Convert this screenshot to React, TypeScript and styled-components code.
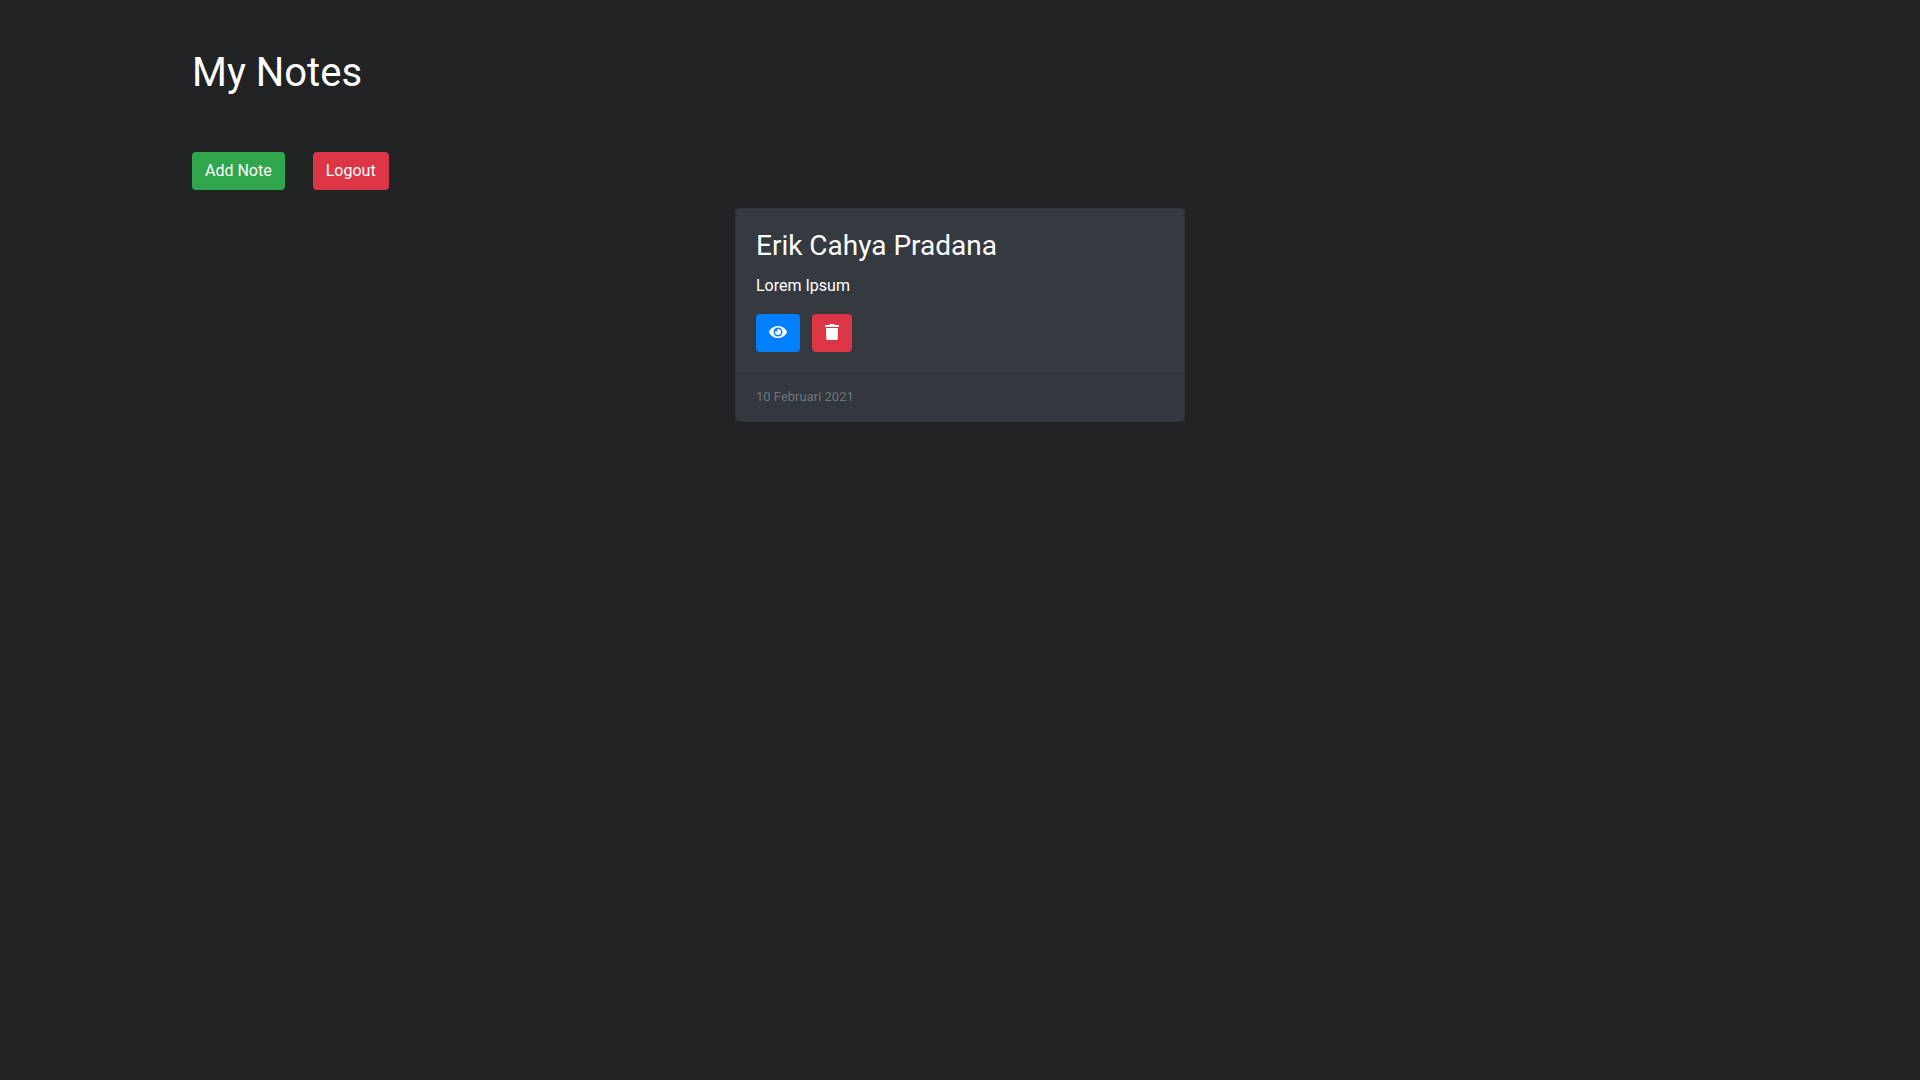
import React from "react";
import styled, { createGlobalStyle } from "styled-components";
import { FaEye } from "react-icons/fa";

const GlobalStyle = createGlobalStyle`
  *, *::before, *::after { box-sizing: border-box; }
  body {
    margin: 0;
    background: #202224;
    color: #fff;
    font: 400 16px/24px Roboto, "Liberation Sans", sans-serif;
  }
`;

const Page = styled.main`
  width: 80%;
  margin: 0 auto;
  padding-top: 48px;
`;

const PageTitle = styled.h1`
  margin: 0 0 54px;
  font-size: 40px;
  line-height: 50px;
  font-weight: 400;
`;

const Toolbar = styled.div`
  display: flex;
  gap: 28px;
  margin-bottom: 18px;
`;

const Button = styled.button<{ $color: string }>`
  display: inline-flex;
  align-items: center;
  justify-content: center;
  height: 38px;
  padding: 0 13px;
  border: 0;
  border-radius: 4px;
  background: ${(p) => p.$color};
  color: #fff;
  font: inherit;
  cursor: pointer;
`;

const IconButton = styled(Button)`
  padding-bottom: 2px;
`;

const TrashSvg = styled.svg`
  width: 14px;
  height: 16px;
  fill: currentColor;
`;

const Notes = styled.section`
  display: flex;
  flex-wrap: wrap;
  justify-content: center;
`;

const Card = styled.article`
  width: 450px;
  max-width: 100%;
  border: 1px solid #2f3439;
  border-radius: 4px;
  background: #353a41;
  overflow: hidden;
`;

const CardBody = styled.div`
  padding: 20px;
`;

const CardTitle = styled.h2`
  margin: 0 0 12px;
  font-size: 28px;
  line-height: 33px;
  font-weight: 400;
`;

const CardText = styled.p`
  margin: 0 0 16px;
`;

const CardActions = styled.div`
  display: flex;
  gap: 12px;
`;

const CardFooter = styled.footer`
  padding: 12px 20px;
  border-top: 1px solid #2e3336;
  background: #33383e;
  color: #6c757d;
  font-size: 13px;
`;

function TrashIcon() {
  return (
    <TrashSvg viewBox="0 0 14 16" aria-hidden="true">
      <path d="M0 1.4Q0 1 .4 1H4.200L4.700.3Q4.900 0 5.300 0H8.700Q9.100 0 9.300.3L9.800 1H13.600Q14 1 14 1.400V2.600Q14 3 13.600 3H.4Q0 3 0 2.600Z" />
      <path d="M1 4H13L12.700 15.200Q12.600 16 11.800 16H2.200Q1.400 16 1.300 15.200Z" />
    </TrashSvg>
  );
}

export default function App() {
  return (
    <>
      <GlobalStyle />
      <Page>
        <PageTitle>My Notes</PageTitle>
        <Toolbar>
          <Button type="button" $color="#2fa64c">Add Note</Button>
          <Button type="button" $color="#dc3545">Logout</Button>
        </Toolbar>
        <Notes>
          <Card>
            <CardBody>
              <CardTitle>Erik Cahya Pradana</CardTitle>
              <CardText>Lorem Ipsum</CardText>
              <CardActions>
                <IconButton type="button" $color="#0080ff" aria-label="View note"><FaEye size={18} /></IconButton>
                <IconButton type="button" $color="#dc3545" aria-label="Delete note"><TrashIcon /></IconButton>
              </CardActions>
            </CardBody>
            <CardFooter>10 Februari 2021</CardFooter>
          </Card>
        </Notes>
      </Page>
    </>
  );
}
